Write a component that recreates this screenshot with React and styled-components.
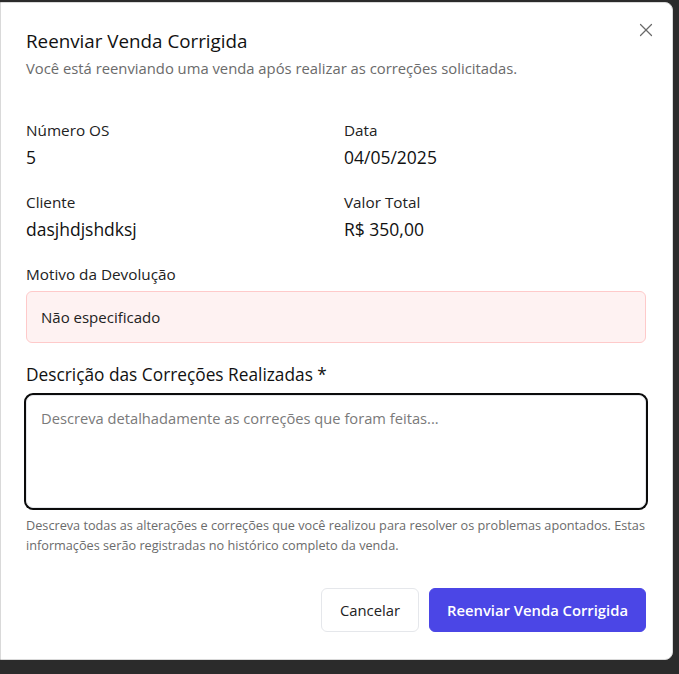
import React from "react";
import styled, { createGlobalStyle } from "styled-components";

const Global = createGlobalStyle`
  html, body { margin: 0; padding: 0; }
  body {
    background: #2b2b2b;
    font-family: "Open Sans", "Noto Sans", Arial, sans-serif;
    color: #111827;
    -webkit-font-smoothing: antialiased;
  }
  * { box-sizing: border-box; }
`;

const Page = styled.div`
  width: 679px;
  height: 674px;
  padding-top: 2px;
`;

const Dialog = styled.div`
  position: relative;
  width: 673px;
  height: 658px;
  background: #fff;
  border: 1px solid #d9d9d9;
  border-radius: 0 8px 8px 0;
  padding: 24px 26px 0 25px;
  display: flex;
  flex-direction: column;
`;

const CloseBtn = styled.button`
  position: absolute;
  top: 15px;
  right: 14px;
  width: 24px;
  height: 24px;
  padding: 0;
  border: none;
  background: transparent;
  color: #6a6a6a;
  display: flex;
  align-items: center;
  justify-content: center;
`;

const Header = styled.div`
  display: flex;
  flex-direction: column;
  gap: 3px;
`;

const Title = styled.h2`
  margin: 0;
  font-size: 18.8px;
  line-height: 28px;
  font-weight: 500;
  color: #111;
`;

const Subtitle = styled.p`
  margin: 0;
  font-size: 14.8px;
  line-height: 20px;
  color: #6b6b6b;
`;

const InfoGrid = styled.div`
  margin-top: 42px;
  display: grid;
  grid-template-columns: 1fr 1fr;
  column-gap: 16px;
  row-gap: 23px;
`;

const Field = styled.div`
  display: flex;
  flex-direction: column;
  gap: 5px;
`;

const Label = styled.div`
  font-size: 15.3px;
  line-height: 20px;
  color: #222;
`;

const Value = styled.div`
  font-size: 17.5px;
  line-height: 24px;
  font-weight: 500;
  color: #111;
`;

const Reason = styled.div`
  margin-top: 23px;
  display: flex;
  flex-direction: column;
  gap: 7px;
`;

const ReasonBox = styled.div`
  height: 52px;
  background: #fef2f2;
  border: 1px solid #fecaca;
  border-radius: 6px;
  padding: 0 14px;
  display: flex;
  align-items: center;
  font-size: 15px;
  color: #222;
`;

const Section = styled.div`
  margin-top: 20px;
  display: flex;
  flex-direction: column;
`;

const SectionLabel = styled.label`
  font-size: 17.3px;
  line-height: 24px;
  font-weight: 500;
  color: #111;
`;

const TextArea = styled.textarea`
  margin-top: 8px;
  height: 113px;
  resize: none;
  border: 1px solid #e5e7eb;
  border-radius: 7px;
  box-shadow: 0 0 0 2px #0b0b0b;
  padding: 12px 14px;
  font-family: inherit;
  font-size: 14.7px;
  line-height: 20px;
  color: #111;
  outline: none;
  &::placeholder { color: #7a7a7a; }
`;

const Help = styled.p`
  margin: 7px 0 0;
  font-size: 12.7px;
  line-height: 20px;
  color: #6b6b6b;
`;

const Footer = styled.div`
  margin-top: 33px;
  display: flex;
  justify-content: flex-end;
  gap: 10px;
`;

const Button = styled.button`
  height: 44px;
  padding: 0 ${(p) => (p.$primary ? 17 : 18)}px;
  border-radius: 6px;
  font-family: inherit;
  font-size: 14.8px;
  font-weight: ${(p) => (p.$primary ? 600 : 500)};
  border: 1px solid ${(p) => (p.$primary ? "#4b46e6" : "#e5e7eb")};
  background: ${(p) => (p.$primary ? "#4b46e6" : "#fff")};
  color: ${(p) => (p.$primary ? "#fff" : "#222")};
`;

export default function App() {
  return (
    <Page>
      <Global />
      <Dialog>
        <CloseBtn aria-label="Fechar">
          <svg width="24" height="24" viewBox="0 0 24 24" fill="none" stroke="currentColor" strokeWidth="1.2" strokeLinecap="round">
            <path d="M17.5 6.5 6.5 17.5" />
            <path d="m6.5 6.5 11 11" />
          </svg>
        </CloseBtn>
        <Header>
          <Title>Reenviar Venda Corrigida</Title>
          <Subtitle>Você está reenviando uma venda após realizar as correções solicitadas.</Subtitle>
        </Header>
        <InfoGrid>
          <Field>
            <Label>Número OS</Label>
            <Value>5</Value>
          </Field>
          <Field>
            <Label>Data</Label>
            <Value>04/05/2025</Value>
          </Field>
          <Field>
            <Label>Cliente</Label>
            <Value>dasjhdjshdksj</Value>
          </Field>
          <Field>
            <Label>Valor Total</Label>
            <Value>R$ 350,00</Value>
          </Field>
        </InfoGrid>
        <Reason>
          <Label>Motivo da Devolução</Label>
          <ReasonBox>Não especificado</ReasonBox>
        </Reason>
        <Section>
          <SectionLabel>Descrição das Correções Realizadas *</SectionLabel>
          <TextArea placeholder="Descreva detalhadamente as correções que foram feitas..." />
          <Help>
            Descreva todas as alterações e correções que você realizou para resolver os problemas apontados. Estas
            informações serão registradas no histórico completo da venda.
          </Help>
        </Section>
        <Footer>
          <Button>Cancelar</Button>
          <Button $primary>Reenviar Venda Corrigida</Button>
        </Footer>
      </Dialog>
    </Page>
  );
}
